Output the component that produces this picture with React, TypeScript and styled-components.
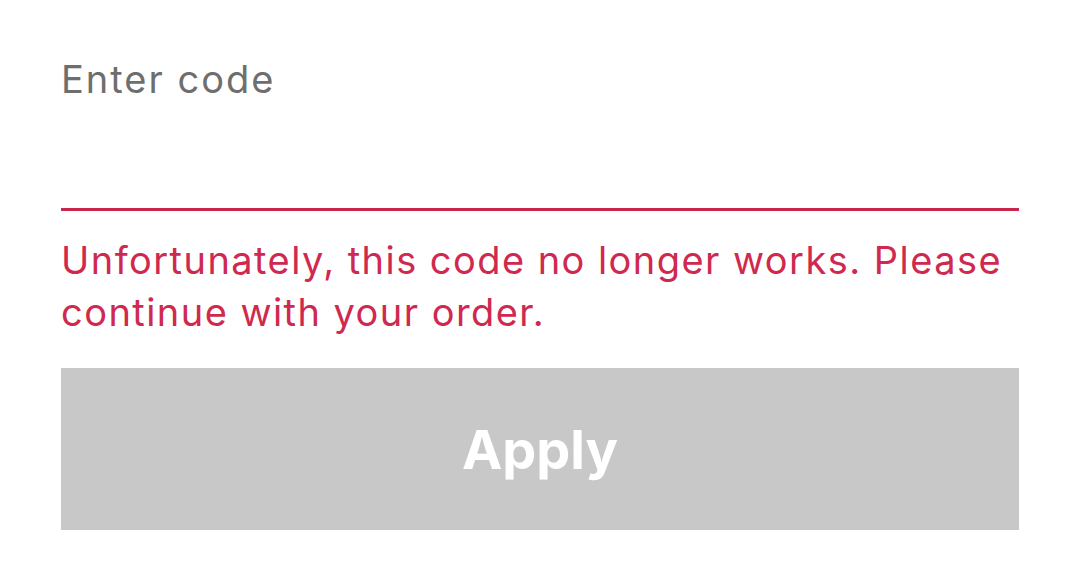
import React from "react";
import styled, { createGlobalStyle } from "styled-components";

const Global = createGlobalStyle`
  html, body { margin: 0; padding: 0; background: #ffffff; }
  body { font-family: Inter, "Noto Sans", sans-serif; }
`;

const Page = styled.div`
  width: 1080px;
  height: 563px;
  box-sizing: border-box;
  padding: 56px 61px 0 61px;
  display: flex;
  flex-direction: column;
`;

const Label = styled.label`
  font-size: 38px;
  line-height: 46px;
  color: #6e6e6e;
  font-weight: 400;
  letter-spacing: 2px;
`;

const Input = styled.input`
  border: none;
  border-bottom: 3px solid #c9264c;
  outline: none;
  background: transparent;
  height: 109px;
  padding: 0;
  margin: 0;
  font-size: 38px;
  box-sizing: border-box;
`;

const ErrorText = styled.p`
  margin: 23px 0 0 0;
  font-size: 38px;
  line-height: 52px;
  letter-spacing: 1.45px;
  color: #d0294f;
`;

const ApplyButton = styled.button`
  margin-top: 30px;
  height: 162px;
  border: none;
  background: #c8c8c8;
  color: #ffffff;
  font-family: inherit;
  font-size: 54px;
  font-weight: 700;
  cursor: not-allowed;
`;

export default function App() {
  return (
    <>
      <Global />
      <Page>
        <Label>Enter code</Label>
        <Input aria-label="Enter code" />
        <ErrorText>
          Unfortunately, this code no longer works. Please continue with your order.
        </ErrorText>
        <ApplyButton disabled>Apply</ApplyButton>
      </Page>
    </>
  );
}
